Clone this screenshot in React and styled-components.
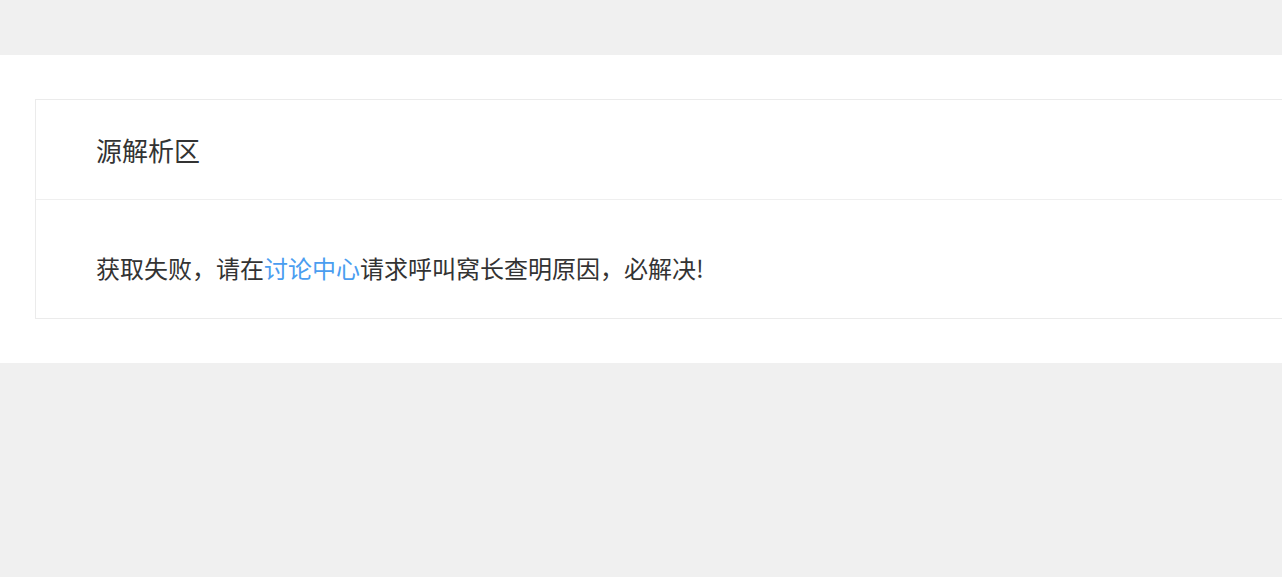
import React from "react";
import styled, { createGlobalStyle } from "styled-components";

const GlobalStyle = createGlobalStyle`
  html, body {
    margin: 0;
    padding: 0;
    background: #f0f0f0;
    font-family: "Noto Sans CJK SC", "Noto Sans", sans-serif;
    color: #333;
    overflow-x: hidden;
  }
`;

const Page = styled.div`
  padding-top: 55px;
  min-height: 577px;
  box-sizing: border-box;
`;

const Section = styled.section`
  background: #fff;
  padding: 44px 0 44px 35px;
  overflow: hidden;
`;

const Card = styled.div`
  border: 1px solid #ebebeb;
  margin-right: -20px;
  background: #fff;
`;

const CardHeader = styled.div`
  height: 100px;
  display: flex;
  align-items: center;
  padding: 0 60px;
  border-bottom: 1px solid #efefef;
  font-size: 26px;
  box-sizing: border-box;
`;

const CardBody = styled.div`
  padding: 50px 60px 32px;
  font-size: 24px;
  line-height: 36px;
`;

const TextLink = styled.a`
  color: #4a9df0;
  text-decoration: none;
  cursor: pointer;
`;

export default function App() {
  return (
    <>
      <GlobalStyle />
      <Page>
        <Section>
          <Card>
            <CardHeader>源解析区</CardHeader>
            <CardBody>
              获取失败，请在<TextLink>讨论中心</TextLink>请求呼叫窝长查明原因，必解决!
            </CardBody>
          </Card>
        </Section>
      </Page>
    </>
  );
}
